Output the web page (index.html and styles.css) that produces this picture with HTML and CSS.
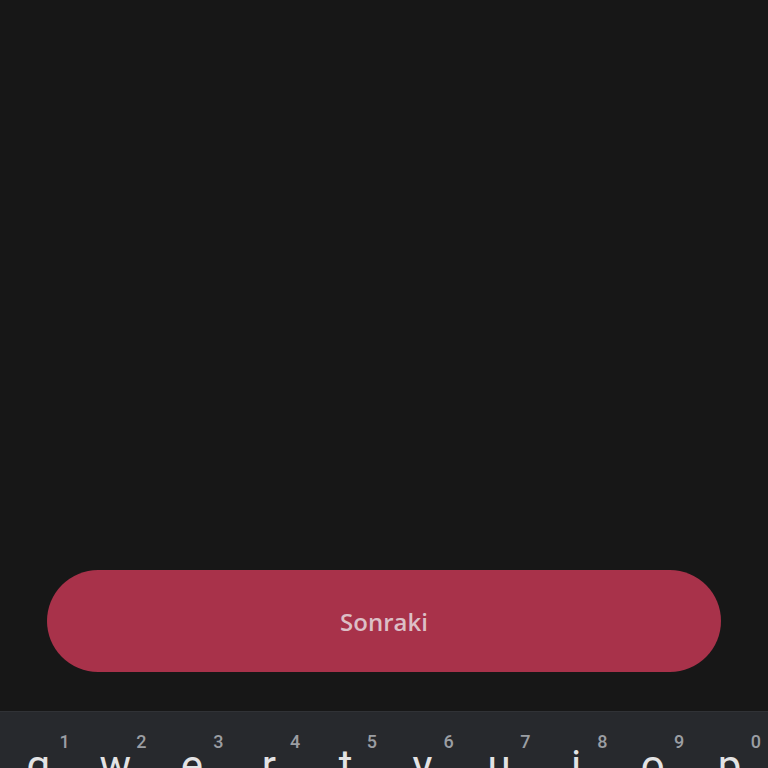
FILE: index.html
```html
<!DOCTYPE html>
<html>
<head>
<meta charset="utf-8">
<link rel="stylesheet" href="styles.css">
</head>
<body>
<div class="screen">
  <main class="content">
    <button class="next-btn">Sonraki</button>
  </main>
  <div class="keyboard">
    <div class="row">
      <div class="key"><span class="hint">1</span><span class="ch">q</span></div>
      <div class="key"><span class="hint">2</span><span class="ch">w</span></div>
      <div class="key"><span class="hint">3</span><span class="ch">e</span></div>
      <div class="key"><span class="hint">4</span><span class="ch">r</span></div>
      <div class="key"><span class="hint">5</span><span class="ch">t</span></div>
      <div class="key"><span class="hint">6</span><span class="ch">y</span></div>
      <div class="key"><span class="hint">7</span><span class="ch">u</span></div>
      <div class="key"><span class="hint">8</span><span class="ch">i</span></div>
      <div class="key"><span class="hint">9</span><span class="ch">o</span></div>
      <div class="key"><span class="hint">0</span><span class="ch">p</span></div>
    </div>
  </div>
</div>
</body>
</html>
```

FILE: styles.css
```css
html, body {
  margin: 0;
  padding: 0;
  background: #171717;
  overflow: hidden;
}
.screen {
  width: 768px;
  height: 768px;
  display: flex;
  flex-direction: column;
}
.content {
  height: 711px;
  display: flex;
  flex-direction: column;
  justify-content: flex-end;
  padding: 0 47px 39px 47px;
  box-sizing: border-box;
}
.next-btn {
  height: 102px;
  width: 100%;
  border: none;
  border-radius: 51px;
  background: #a8324a;
  color: #dcbfc6;
  font-family: "Open Sans", sans-serif;
  font-weight: 600;
  font-size: 24px;
  letter-spacing: 0;
  cursor: pointer;
}
.keyboard {
  flex: 1;
  background: #27292d;
  border-top: 1px solid #303236;
  box-sizing: border-box;
  overflow: hidden;
}
.row {
  display: grid;
  grid-template-columns: repeat(10, 1fr);
  height: 80px;
}
.key {
  position: relative;
  display: flex;
  justify-content: center;
}
.hint {
  position: absolute;
  top: 19px;
  right: 7px;
  font-family: Roboto, sans-serif;
  font-weight: 500;
  font-size: 18px;
  color: #9b9ea3;
}
.ch {
  margin-top: 33px;
  font-family: Roboto, sans-serif;
  font-size: 42px;
  color: #e3e3e4;
  line-height: 1;
}
```
